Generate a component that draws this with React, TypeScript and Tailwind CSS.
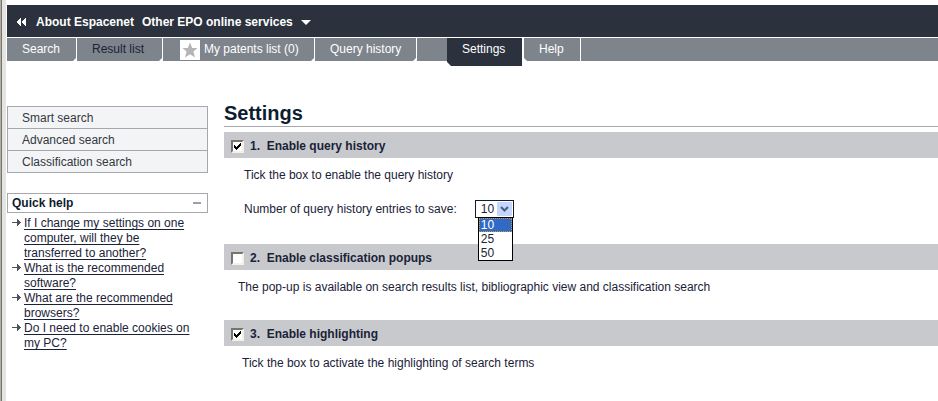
import { useState, type ReactNode } from "react";

const tab = "flex items-center h-[23px] bg-[#7e848b] text-white";
const cutRight =
  "[clip-path:polygon(0_0,100%_0,100%_calc(100%-3px),calc(100%-3px)_100%,0_100%)]";

const searches = ["Smart search", "Advanced search", "Classification search"];

const questions = [
  "If I change my settings on one computer, will they be transferred to another?",
  "What is the recommended software?",
  "What are the recommended browsers?",
  "Do I need to enable cookies on my PC?",
];

const sizes = ["10", "25", "50"];

function Section({
  id,
  title,
  checked,
  children,
}: {
  id: string;
  title: string;
  checked: boolean;
  children: ReactNode;
}) {
  return (
    <section>
      <div className="flex h-[26px] items-center bg-[#c8c9cd] pt-0.5 pl-[7px] font-bold">
        <span className="relative h-[13px] w-[13px]">
          <input
            id={id}
            type="checkbox"
            defaultChecked={checked}
            className="peer block h-[13px] w-[13px] appearance-none border-2 border-t-[#77756a] border-r-[#f3f1e8] border-b-[#f3f1e8] border-l-[#77756a] bg-white"
          />
          <svg
            viewBox="0 0 13 13"
            aria-hidden="true"
            shapeRendering="crispEdges"
            className="pointer-events-none absolute inset-0 hidden h-[13px] w-[13px] peer-checked:block"
          >
            <path
              d="M3 5h1v3H3zM4 6h1v3H4zM5 7h1v3H5zM6 6h1v3H6zM7 5h1v3H7zM8 4h1v3H8zM9 3h1v3H9z"
              fill="#000"
            />
          </svg>
        </span>
        <label htmlFor={id} className="pl-[6px] whitespace-pre">
          {title}
        </label>
      </div>
      {children}
    </section>
  );
}

export default function App() {
  const [size, setSize] = useState("10");

  return (
    <div className="flex min-h-screen bg-white font-['Liberation_Sans',Arial,sans-serif] text-[12px] leading-[15px] text-[#1a2238]">
      <div className="w-[6px] shrink-0 border-l border-[#b3af9f] bg-[#e4e4e4]">
        <div className="h-full w-px bg-[#77756b]" />
      </div>
      <div className="min-w-0 flex-1 pt-[5px] pl-px">
        <header>
          <div className="flex h-8 items-center bg-[#2b323e] pt-0.5 pl-[10px] font-bold text-white">
            <button type="button" aria-label="Collapse">
              <svg
                width="9"
                height="8"
                viewBox="0 0 9 8"
                fill="#fff"
                aria-hidden="true"
                shapeRendering="crispEdges"
              >
                <path d="M3 0h1v8H3V7H2V6H1V5H0V3h1V2h1V1h1zM8 0h1v8H8V7H7V6H6V5H5V3h1V2h1V1h1z" />
              </svg>
            </button>
            <a href="#about" className="ml-[10px]">
              About Espacenet
            </a>
            <a href="#services" className="ml-2 flex items-center">
              Other EPO online services
              <svg
                width="10"
                height="5"
                viewBox="0 0 10 5"
                fill="#fff"
                aria-hidden="true"
                className="ml-2"
              >
                <path d="M0 0h10L5 5z" />
              </svg>
            </a>
          </div>
          <nav className="mt-px flex h-7 items-start">
            <a href="#search" className={`${tab} ${cutRight} mr-px w-[69px] pl-[15px]`}>
              Search
            </a>
            <a href="#results" className={`${tab} ${cutRight} mr-px w-[85px] pl-[15px]`}>
              <span className="text-[#1a2238]">Result list</span>
            </a>
            <a href="#patents" className={`${tab} ${cutRight} mr-px w-[151px] gap-1 pl-[17px]`}>
              <svg width="20" height="20" viewBox="0 0 20 20" aria-hidden="true" className="shrink-0">
                <path d="M0 0h20v20H0z" fill="#fff" />
                <path
                  d="M10 2.500l2.200 5.500H17.500l-4.100 3.600L15 17.500 10 14.200 5 17.500l1.600-5.900L2.500 8h5.300z"
                  fill="#b4b5b8"
                />
              </svg>
              <span className="whitespace-nowrap">My patents list (0)</span>
            </a>
            <a href="#history" className={`${tab} ${cutRight} mr-px w-[101px] pl-[15px]`}>
              Query history
            </a>
            <div className="h-[23px] w-[30px] bg-[#7e848b]" />
            <a
              href="#settings"
              aria-current="page"
              className="mr-0.5 h-7 w-[75px] bg-[#2b323e] pt-1 pl-[15px] text-white [clip-path:polygon(0_0,100%_0,100%_100%,4px_100%,0_calc(100%-4px))]"
            >
              Settings
            </a>
            <a
              href="#help"
              className={`${tab} mr-px w-14 pl-[15px] [clip-path:polygon(0_0,100%_0,100%_100%,3px_100%,0_calc(100%-3px))]`}
            >
              Help
            </a>
            <div className="h-[23px] flex-1 bg-[#7e848b]" />
          </nav>
        </header>

        <div className="flex items-start">
          <aside className="w-[201px] shrink-0 pt-10">
            <nav className="border border-b-0 border-[#a6a8ad] bg-[#f3f4f6]">
              {searches.map((name) => (
                <a
                  key={name}
                  href="#search"
                  className="flex h-[22px] items-center border-b border-[#a6a8ad] pt-0.5 pl-[14px] text-[#333741]"
                >
                  {name}
                </a>
              ))}
            </nav>
            <div className="mt-5 flex h-5 items-center justify-between border border-[#a6a8ad] pr-[6px] pl-1">
              <h2 className="font-bold text-[#0e1c30]">Quick help</h2>
              <button type="button" aria-label="Collapse quick help" className="h-0.5 w-2 bg-[#9da1a7]" />
            </div>
            <ul className="pt-[3px] pr-2 pl-[5px]">
              {questions.map((question) => (
                <li key={question} className="flex items-start gap-[3px]">
                  <svg
                    width="9"
                    height="7"
                    viewBox="0 0 9 7"
                    fill="#4c535d"
                    aria-hidden="true"
                    shapeRendering="crispEdges"
                    className="mt-[3px] shrink-0"
                  >
                    <path d="M0 3h5V0h1v1h1v1h1v1h1v1H8v1H7v1H6v1H5V4H0z" />
                  </svg>
                  <a href="#faq" className="underline underline-offset-2">
                    {question}
                  </a>
                </li>
              ))}
            </ul>
          </aside>

          <main className="ml-4 min-w-0 flex-1 pt-[35px]">
            <h1 className="h-[26px] border-b border-[#a6a8ad] text-[20px] leading-6 font-bold text-[#0e1c30]">
              Settings
            </h1>
            <div className="pt-[5px]">
              <Section id="query-history" title="1.  Enable query history" checked>
                <p className="pt-[10px] pl-5">Tick the box to enable the query history</p>
                <div className="flex items-center pt-[17px] pb-[26px] pl-5">
                  <label htmlFor="entries">Number of query history entries to save:</label>
                  <div className="relative ml-[18px] h-[18px] w-[39px]">
                    <select
                      id="entries"
                      value={size}
                      onChange={(event) => setSize(event.target.value)}
                      className="block h-[18px] w-full appearance-none rounded-none border border-[#0e1c30] bg-white pl-[5px] leading-4"
                    >
                      {sizes.map((value) => (
                        <option key={value}>{value}</option>
                      ))}
                    </select>
                    <svg
                      width="15"
                      height="14"
                      viewBox="0 0 15 14"
                      aria-hidden="true"
                      className="pointer-events-none absolute top-0.5 right-0.5"
                    >
                      <rect width="15" height="14" rx="1" fill="#c5d5fb" />
                      <path d="M4 5l3.500 3.500L11 5" fill="none" stroke="#4d6185" strokeWidth="2.200" />
                    </svg>
                    <ul
                      role="listbox"
                      aria-label="Entries to save"
                      className="absolute top-[17px] left-[3px] z-10 w-[35px] border border-black bg-white leading-[14px]"
                    >
                      {sizes.map((value) => (
                        <li
                          key={value}
                          role="option"
                          aria-selected={value === size}
                          onClick={() => setSize(value)}
                          className={
                            value === size
                              ? "bg-[#316ac5] pl-0.5 text-white outline-1 -outline-offset-1 outline-dotted outline-[#ce953a]"
                              : "pl-0.5"
                          }
                        >
                          {value}
                        </li>
                      ))}
                    </ul>
                  </div>
                </div>
              </Section>
              <Section id="popups" title="2.  Enable classification popups" checked={false}>
                <p className="pt-[10px] pb-[25px] pl-[14px]">
                  The pop-up is available on search results list, bibliographic view and classification search
                </p>
              </Section>
              <Section id="highlighting" title="3.  Enable highlighting" checked>
                <p className="pt-[10px] pl-[18px]">Tick the box to activate the highlighting of search terms</p>
              </Section>
            </div>
          </main>
        </div>
      </div>
    </div>
  );
}
